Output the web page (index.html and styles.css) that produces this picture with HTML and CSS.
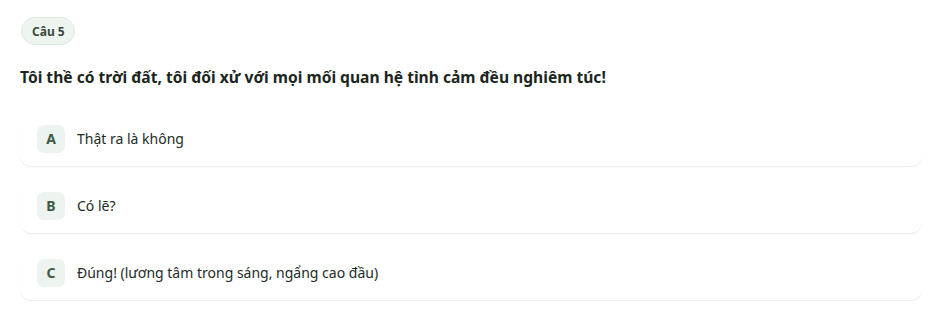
FILE: index.html
```html
<!DOCTYPE html>
<html lang="vi">
<head>
    <meta charset="UTF-8">
    <meta name="viewport" content="width=device-width, initial-scale=1.0">
    <title>Câu 5</title>
    <link rel="stylesheet" href="styles.css">
</head>
<body>
    <!-- Frage -->
    <div class="quiz">
        <span class="tag">Câu 5</span>
        <h2 class="question">Tôi thề có trời đất, tôi đối xử với mọi mối quan hệ tình cảm đều nghiêm túc!</h2>

        <!-- Antworten -->
        <div class="options">
            <div class="option">
                <span class="letter">A</span>
                <span class="label">Thật ra là không</span>
            </div>
            <div class="option">
                <span class="letter">B</span>
                <span class="label">Có lẽ?</span>
            </div>
            <div class="option">
                <span class="letter">C</span>
                <span class="label">Đúng! (lương tâm trong sáng, ngẩng cao đầu)</span>
            </div>
        </div>
    </div>
</body>
</html>
```

FILE: styles.css
```css
/* Grundlegendes Styling */
* {
    margin: 0;
    padding: 0;
    box-sizing: border-box;
    font-family: "Noto Sans", Arial, sans-serif;
}

body {
    background-color: #fff;
    color: #1f2a23;
}

.quiz {
    display: flex;
    flex-direction: column;
    align-items: flex-start;
    padding: 17px 21px 0 20px;
}

.tag {
    display: inline-flex;
    align-items: center;
    height: 28px;
    padding: 0 9px 0 10px;
    margin-left: 1px;
    font-size: 12px;
    font-weight: 700;
    color: #3a4a3f;
    background-color: #eef5ef;
    border: 1px solid #dce9de;
    border-radius: 14px;
}

.question {
    margin-top: 20px;
    font-size: 15.6px;
    line-height: 24px;
    font-weight: 700;
    color: #1c2620;
}

.options {
    display: flex;
    flex-direction: column;
    gap: 11px;
    width: 100%;
    margin-top: 22px;
}

.option {
    display: flex;
    align-items: center;
    gap: 12px;
    height: 56px;
    padding: 0 17px;
    background-color: #fff;
    border-radius: 12px;
    border-bottom: 1px solid #e9efeb;
    box-shadow: 0 1px 2px rgba(40, 60, 45, 0.03);
}

.letter {
    display: flex;
    align-items: center;
    justify-content: center;
    width: 28px;
    height: 28px;
    border-radius: 7px;
    background-color: #edf3ee;
    color: #3c5a44;
    font-size: 14px;
    font-weight: 700;
}

.label {
    font-size: 14px;
    color: #222b25;
}
```
